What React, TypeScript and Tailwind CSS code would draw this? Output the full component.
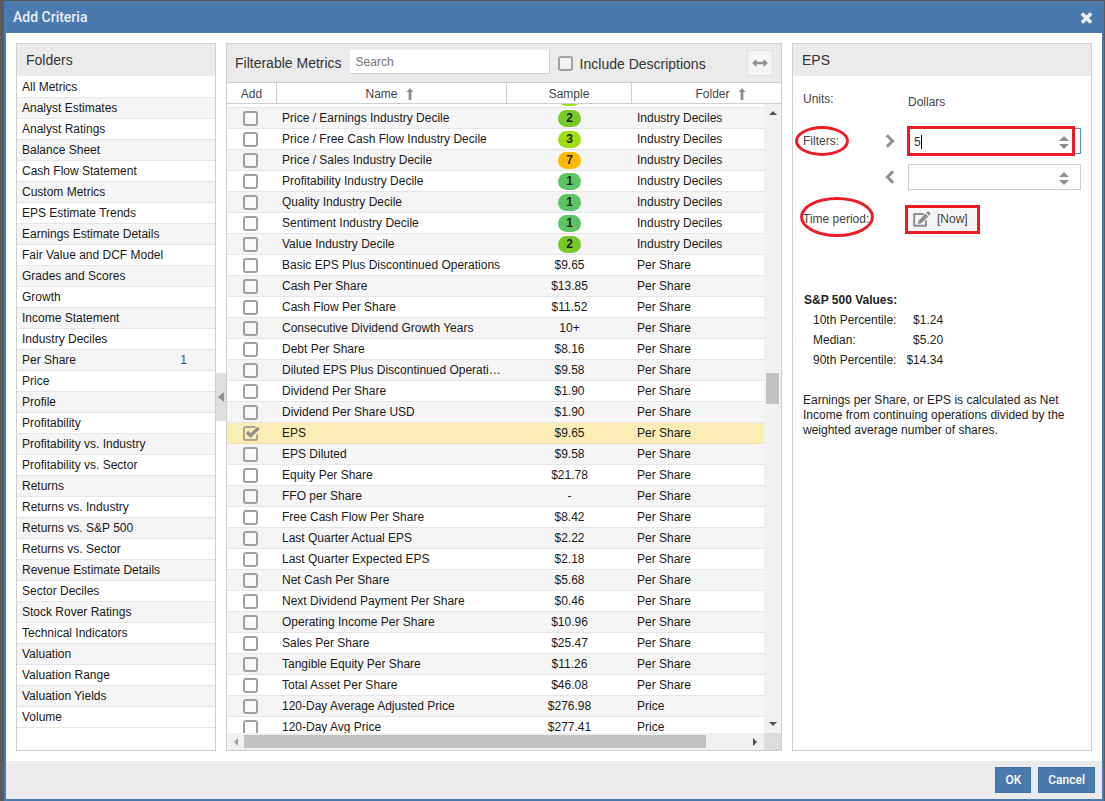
import { ReactNode, useState } from 'react';

const FOLDERS = [
  'All Metrics', 'Analyst Estimates', 'Analyst Ratings', 'Balance Sheet', 'Cash Flow Statement',
  'Custom Metrics', 'EPS Estimate Trends', 'Earnings Estimate Details', 'Fair Value and DCF Model',
  'Grades and Scores', 'Growth', 'Income Statement', 'Industry Deciles', 'Per Share', 'Price', 'Profile',
  'Profitability', 'Profitability vs. Industry', 'Profitability vs. Sector', 'Returns',
  'Returns vs. Industry', 'Returns vs. S&P 500', 'Returns vs. Sector', 'Revenue Estimate Details',
  'Sector Deciles', 'Stock Rover Ratings', 'Technical Indicators', 'Valuation', 'Valuation Range',
  'Valuation Yields', 'Volume',
];

type Metric = [name: string, sample: string, folder: string];

const METRICS: Metric[] = [
  ['Price / Earnings Industry Decile', '2', 'Industry Deciles'],
  ['Price / Free Cash Flow Industry Decile', '3', 'Industry Deciles'],
  ['Price / Sales Industry Decile', '7', 'Industry Deciles'],
  ['Profitability Industry Decile', '1', 'Industry Deciles'],
  ['Quality Industry Decile', '1', 'Industry Deciles'],
  ['Sentiment Industry Decile', '1', 'Industry Deciles'],
  ['Value Industry Decile', '2', 'Industry Deciles'],
  ['Basic EPS Plus Discontinued Operations', '$9.65', 'Per Share'],
  ['Cash Per Share', '$13.85', 'Per Share'],
  ['Cash Flow Per Share', '$11.52', 'Per Share'],
  ['Consecutive Dividend Growth Years', '10+', 'Per Share'],
  ['Debt Per Share', '$8.16', 'Per Share'],
  ['Diluted EPS Plus Discontinued Operati…', '$9.58', 'Per Share'],
  ['Dividend Per Share', '$1.90', 'Per Share'],
  ['Dividend Per Share USD', '$1.90', 'Per Share'],
  ['EPS', '$9.65', 'Per Share'],
  ['EPS Diluted', '$9.58', 'Per Share'],
  ['Equity Per Share', '$21.78', 'Per Share'],
  ['FFO per Share', '-', 'Per Share'],
  ['Free Cash Flow Per Share', '$8.42', 'Per Share'],
  ['Last Quarter Actual EPS', '$2.22', 'Per Share'],
  ['Last Quarter Expected EPS', '$2.18', 'Per Share'],
  ['Net Cash Per Share', '$5.68', 'Per Share'],
  ['Next Dividend Payment Per Share', '$0.46', 'Per Share'],
  ['Operating Income Per Share', '$10.96', 'Per Share'],
  ['Sales Per Share', '$25.47', 'Per Share'],
  ['Tangible Equity Per Share', '$11.26', 'Per Share'],
  ['Total Asset Per Share', '$46.08', 'Per Share'],
  ['120-Day Average Adjusted Price', '$276.98', 'Price'],
  ['120-Day Avg Price', '$277.41', 'Price'],
];

const DECILE_COLORS: Record<string, string> = {
  '1': 'bg-[#5cc465]',
  '2': 'bg-[#77c928]',
  '3': 'bg-[#a1dd10]',
  '7': 'bg-[#fcb900]',
};

function CloseIcon() {
  return (
    <svg viewBox="0 0 1408 1408" fill="currentColor" className="size-[13px]" aria-hidden="true">
      <path d="M1298 1130q0 40-28 68l-136 136q-28 28-68 28t-68-28l-294-294-294 294q-28 28-68 28t-68-28l-136-136q-28-28-28-68t28-68l294-294-294-294q-28-28-28-68t28-68l136-136q28-28 68-28t68 28l294 294 294-294q28-28 68-28t68 28l136 136q28 28 28 68t-28 68l-294 294 294 294q28 28 28 68z" />
    </svg>
  );
}

function EditIcon() {
  return (
    <svg viewBox="0 0 18 16" className="w-[18px] h-4 text-[#8f8f8f]" fill="none" aria-hidden="true">
      <path d="M10.5 3H1.2V14.8H13V9.5" stroke="currentColor" strokeWidth="2" />
      <path d="M12.4 2.6L15.3 5.5L8.4 12.2L4.8 13L5.6 9.4z" fill="currentColor" />
      <path d="M13.2 1.8L14.5 .5Q15 0 15.6 .5L17.4 2.3Q17.9 2.9 17.4 3.4L16.1 4.7z" fill="currentColor" />
    </svg>
  );
}

function SortArrow() {
  return (
    <svg viewBox="0 0 8 12" className="w-2 h-3 text-[#8f8f8f]" fill="currentColor" aria-hidden="true">
      <path d="M4 0L7.4 4H5.4V12H2.6V4H.6z" />
    </svg>
  );
}

function Triangle({ dir, className }: { dir: 'up' | 'down' | 'left' | 'right'; className?: string }) {
  const points = { up: '0,6 4,2 8,6', down: '0,2 4,6 8,2', left: '6,0 2,4 6,8', right: '2,0 6,4 2,8' };
  return (
    <svg viewBox="0 0 8 8" className={`size-2 shrink-0 ${className ?? ''}`} fill="currentColor" aria-hidden="true">
      <polygon points={points[dir]} />
    </svg>
  );
}

interface CheckProps {
  checked: boolean;
  onChange: () => void;
  label?: string;
}
function Check({ checked, onChange, label }: CheckProps) {
  return (
    <span className="relative inline-flex size-[15px] shrink-0">
      <input
        type="checkbox"
        aria-label={label}
        checked={checked}
        onChange={onChange}
        className="appearance-none size-[15px] rounded-[3px] border-2 border-[#a0a0a0] bg-white/40 checked:border-transparent checked:bg-transparent"
      />
      {checked && (
        <svg viewBox="0 0 17 15" className="absolute left-0 top-0 w-[17px] h-[15px] text-[#8f8f8f] pointer-events-none" fill="none" stroke="currentColor" aria-hidden="true">
          <path d="M12.5 .9H3Q.9 .9 .9 3V12Q.9 14.1 3 14.1H12Q14.1 14.1 14.1 12V8.5" strokeWidth="1.5" />
          <path d="M4 6L7.6 9.6L15.6 1.9" strokeWidth="3.4" />
        </svg>
      )}
    </span>
  );
}

function Panel({ children, className }: { children: ReactNode; className: string }) {
  return <section className={`flex flex-col min-h-0 border border-[#cfcfcf] bg-white ${className}`}>{children}</section>;
}

function FoldersPanel() {
  return (
    <Panel className="w-[200px] shrink-0">
      <h2 className="h-8 px-[9px] flex items-center bg-[#ebebeb] text-sm text-[#333]">Folders</h2>
      <ul className="pt-px">
        {FOLDERS.map((name, i) => (
          <li
            key={name}
            className={`h-[21px] border-b border-[#e6e6e6] pl-[5px] pr-7 flex items-center justify-between ${i % 2 ? 'bg-[#f5f5f5]' : ''}`}
          >
            <span>{name}</span>
            {name === 'Per Share' && <span className="text-[#35556f]">1</span>}
          </li>
        ))}
      </ul>
    </Panel>
  );
}

function MetricsPanel() {
  const [selected, setSelected] = useState<string[]>(['EPS']);
  const [descriptions, setDescriptions] = useState(false);

  const toggle = (name: string) =>
    setSelected((prev) => (prev.includes(name) ? prev.filter((n) => n !== name) : [...prev, name]));

  return (
    <Panel className="flex-1 min-w-0">
      {/* Toolbar */}
      <div className="h-[39px] shrink-0 border-b border-[#cfcfcf] bg-[#ebebeb] px-2 flex items-center text-sm text-[#333]">
        <h2>Filterable Metrics</h2>
        <input
          type="search"
          aria-label="Search metrics"
          placeholder="Search"
          className="ml-2 mb-0.5 w-[200px] h-6 px-[6px] bg-white border-r border-b border-[#cfcfcf] text-xs outline-none placeholder:text-[#757575]"
        />
        <label className="ml-2 flex items-center gap-[7px]">
          <Check checked={descriptions} onChange={() => setDescriptions(!descriptions)} />
          <span className="pt-px">Include Descriptions</span>
        </label>
        <button aria-label="Resize columns" className="ml-auto size-[26px] flex items-center justify-center border border-[#e0e0e0] bg-[#f5f5f5] text-[#8f8f8f]">
          <svg viewBox="0 0 16 8" className="w-4 h-2" fill="currentColor" aria-hidden="true">
            <path d="M0 4L4.5 0V2.8H11.5V0L16 4L11.5 8V5.2H4.5V8z" />
          </svg>
        </button>
      </div>

      {/* Column headers */}
      <div className="shrink-0 border-b border-[#cfcfcf]">
        <table className="w-full table-fixed border-separate border-spacing-0 text-[#444]">
          <thead>
            <tr>
              <th className="w-[50px] h-5 p-0 pt-px font-normal border-r border-[#cfcfcf]">Add</th>
              <th className="p-0 pt-px pr-1 font-normal border-r border-[#cfcfcf]">
                <span className="flex items-center justify-center gap-2">Name <SortArrow /></span>
              </th>
              <th className="w-[125px] p-0 pt-px font-normal border-r border-[#cfcfcf]">Sample</th>
              <th className="w-[149px] p-0 pt-px pl-7 font-normal">
                <span className="flex items-center justify-center gap-2">Folder <SortArrow /></span>
              </th>
            </tr>
          </thead>
        </table>
      </div>

      {/* Rows and vertical scrollbar */}
      <div className="flex-1 min-h-0 flex">
        <div className="flex-1 min-w-0 overflow-hidden">
          {/* Tail of the row that is scrolled out above */}
          <div className="h-1 pl-[331px] border-b border-[#e6e6e6] overflow-hidden flex items-end">
            <span className="mb-px w-[23px] h-[17px] shrink-0 rounded-full bg-[#a1dd10]" />
          </div>
          <table className="w-full table-fixed border-separate border-spacing-0">
            <colgroup>
              <col className="w-[50px]" />
              <col />
              <col className="w-[125px]" />
              <col className="w-[132px]" />
            </colgroup>
            <tbody>
              {METRICS.map(([name, sample, folder], i) => {
                const active = name === 'EPS';
                const decile = DECILE_COLORS[sample];
                const cell = `h-[21px] p-0 border-b leading-5 ${active ? 'border-[#f0dfa8]' : 'border-[#e6e6e6]'}`;
                return (
                  <tr key={name} className={active ? 'bg-[#fcedb6]' : i % 2 ? '' : 'bg-[#f5f5f5]'}>
                    <td className={cell}>
                      <span className="h-5 pr-[3px] flex items-center justify-center">
                        <Check checked={selected.includes(name)} onChange={() => toggle(name)} label={name} />
                      </span>
                    </td>
                    <td className={`${cell} pl-[5px]`}><div className="truncate">{name}</div></td>
                    <td className={`${cell} text-center`}>
                      <span className="h-5 flex items-center justify-center">
                        {decile ? (
                          <span className={`w-[23px] h-[17px] rounded-full leading-[17px] font-bold text-[#222] ${decile}`}>{sample}</span>
                        ) : (
                          sample
                        )}
                      </span>
                    </td>
                    <td className={`${cell} pl-[5px]`}>{folder}</td>
                  </tr>
                );
              })}
            </tbody>
          </table>
        </div>
        <div className="w-[17px] shrink-0 bg-[#f1f1f1] px-0.5 py-[5px] flex flex-col items-center text-[#505050]">
          <Triangle dir="up" />
          <div className="flex-[256] min-h-0" />
          <div className="w-full h-[31px] bg-[#c1c1c1]" />
          <div className="flex-[316] min-h-0" />
          <Triangle dir="down" />
        </div>
      </div>

      {/* Horizontal scrollbar */}
      <div className="h-[17px] shrink-0 flex text-[#505050]">
        <div className="flex-1 bg-[#f1f1f1] px-[5px] py-0.5 flex items-center">
          <Triangle dir="left" className="text-[#a3a3a3]" />
          <div className="ml-1 flex-[462] h-full bg-[#c1c1c1]" />
          <div className="flex-[45]" />
          <Triangle dir="right" />
        </div>
        <div className="w-[17px] bg-[#dcdcdc]" />
      </div>
    </Panel>
  );
}

interface FilterFieldProps {
  op: 'more' | 'less';
  value: string;
  onChange: (value: string) => void;
}
function FilterField({ op, value, onChange }: FilterFieldProps) {
  const more = op === 'more';
  const step = (by: number) => onChange(String((Number(value) || 0) + by));
  return (
    <>
      <svg viewBox="0 0 10 14" className="w-[10px] h-[14px] mr-[13px] shrink-0 text-[#8f8f8f]" fill="none" stroke="currentColor" strokeWidth="3" aria-hidden="true">
        <path d={more ? 'M1.8 1.2L7.6 7L1.8 12.8' : 'M8.2 1.2L2.4 7L8.2 12.8'} />
      </svg>
      <div className={`relative flex-1 min-w-0 h-[26px] border flex items-center bg-white ${more ? 'border-[#5b8abb]' : 'border-[#cfcfcf]'}`}>
        <input
          aria-label={more ? 'Greater than' : 'Less than'}
          value={value}
          onChange={(e) => onChange(e.target.value)}
          className="flex-1 min-w-0 h-full pl-[5px] pt-px text-[#333] outline-none"
        />
        {more && <span className="absolute left-3 top-1.5 w-px h-3.5 bg-black" />}
        <div className="w-[11px] mr-[10px] pt-0.5 flex flex-col gap-[3px] text-[#8f8f8f]">
          <button aria-label="Increase" onClick={() => step(1)}>
            <svg viewBox="0 0 10 5" className="w-[10px] h-[5px]" fill="currentColor"><path d="M0 5L5 0L10 5z" /></svg>
          </button>
          <button aria-label="Decrease" onClick={() => step(-1)}>
            <svg viewBox="0 0 10 5" className="w-[10px] h-[5px]" fill="currentColor"><path d="M0 0L5 5L10 0z" /></svg>
          </button>
        </div>
        {/* Marker */}
        {more && <span className="absolute -left-0.5 right-[5px] -inset-y-[3px] border-3 border-[#ed1c24] pointer-events-none" />}
      </div>
    </>
  );
}

function DetailPanel() {
  const [min, setMin] = useState('5');
  const [max, setMax] = useState('');

  return (
    <Panel className="w-[300px] shrink-0">
      <h2 className="h-8 px-[9px] flex items-center bg-[#ebebeb] text-sm text-[#333]">EPS</h2>
      <div className="px-[10px] pt-3.5 text-[#444]">
        <div className="h-6 flex items-center">
          <span className="w-[105px] self-start leading-[18px]">Units:</span>
          <span>Dollars</span>
        </div>
        <div className="mt-3.5 flex items-center">
          <span className="w-[82px] shrink-0">
            <span className="relative">
              Filters:
              <span className="absolute -left-2 -right-[10px] -inset-y-2 border-3 border-[#ed1c24] rounded-[50%]" />
            </span>
          </span>
          <FilterField op="more" value={min} onChange={setMin} />
        </div>
        <div className="mt-2.5 pl-[82px] flex items-center">
          <FilterField op="less" value={max} onChange={setMax} />
        </div>
        <div className="mt-4 flex items-center">
          <span className="w-[105px] shrink-0">
            <span className="relative">
              Time period:
              <span className="absolute -left-[3px] -right-[5px] -top-[15px] -bottom-[11px] border-3 border-[#ed1c24] rounded-[50%]" />
            </span>
          </span>
          <button className="relative h-[26px] pl-[5px] pr-[9px] flex items-center gap-1.5 bg-[#f5f5f5]">
            <EditIcon />
            [Now]
            <span className="absolute -left-[3px] -right-[3px] -top-px -bottom-0.5 border-3 border-[#ed1c24]" />
          </button>
        </div>

        <table className="mt-[58px] leading-5 text-[#222] whitespace-nowrap">
          <caption className="text-left pl-px font-bold text-[#222]">S&amp;P 500 Values:</caption>
          <tbody>
            <tr>
              <td className="p-0 pl-[10px]">10th Percentile:</td>
              <td className="p-0 pl-[10px] text-right">$1.24</td>
            </tr>
            <tr>
              <td className="p-0 pl-[10px]">Median:</td>
              <td className="p-0 pl-[10px] text-right">$5.20</td>
            </tr>
            <tr>
              <td className="p-0 pl-[10px]">90th Percentile:</td>
              <td className="p-0 pl-[10px] text-right">$14.34</td>
            </tr>
          </tbody>
        </table>
        <p className="mt-[23px] leading-[15px] text-[#222]">
          Earnings per Share, or EPS is calculated as Net Income from continuing operations divided by the
          weighted average number of shares.
        </p>
      </div>
    </Panel>
  );
}

export default function App() {
  return (
    <div className="h-screen bg-[#5a5a5a] pt-px pl-1 pr-px font-['Liberation_Sans',Arial,sans-serif] text-xs text-[#1a1a1a]">
      <div className="h-full flex flex-col border-2 border-t-0 border-[#4a7aae] bg-white">
        <header className="h-8 shrink-0 bg-[#4a7aae] px-[7px] flex items-center justify-between text-[#e8eff6]">
          <h1 className="font-['Roboto','Liberation_Sans',sans-serif] text-sm font-medium">Add Criteria</h1>
          <button aria-label="Close" className="pr-0.5">
            <CloseIcon />
          </button>
        </header>

        <main className="flex-1 min-h-0 p-[10px] flex">
          <FoldersPanel />
          <button aria-label="Collapse folders" className="w-[10px] h-12 shrink-0 self-center flex items-center justify-center bg-[#dedede] text-[#8f8f8f]">
            <svg viewBox="0 0 6 10" className="w-1.5 h-2.5" fill="currentColor"><path d="M6 0V10L0 5z" /></svg>
          </button>
          <MetricsPanel />
          <div className="w-[10px] shrink-0" />
          <DetailPanel />
        </main>

        <footer className="h-[38px] shrink-0 bg-[#ebebeb] px-[7px] flex items-center justify-end gap-[7px] text-white font-['Roboto','Liberation_Sans',sans-serif] font-medium">
          <button className="h-[26px] px-[9px] bg-[#4a7aae] border border-[#4271a3]">OK</button>
          <button className="h-[26px] px-[9px] bg-[#4a7aae] border border-[#4271a3]">Cancel</button>
        </footer>
      </div>
    </div>
  );
}
